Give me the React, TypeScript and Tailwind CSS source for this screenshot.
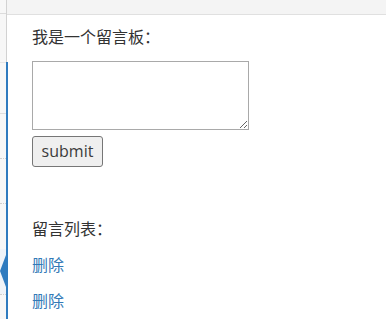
import React from "react";

export default function App() {
  const font = { fontFamily: '"Open Sans", "Noto Sans CJK SC", sans-serif' };
  const cjk = { fontFamily: '"Noto Sans CJK SC", sans-serif' };
  return (
    <div className="flex w-[387px] h-[319px] overflow-hidden bg-white" style={font}>
      {/* left rail */}
      <div className="flex flex-col w-[6px] h-full bg-[#f7f7f7]">
        <div className="h-[13px] shrink-0" />
        <div className="h-[1px] shrink-0 bg-[#dcdcdc]" />
        <div className="h-[48px] shrink-0" />
        <div className="h-[1px] shrink-0 bg-[#e6e6e6]" />
        <div className="h-[50px] shrink-0" />
        <div className="h-[1px] shrink-0 bg-[#dedede]" />
        <div className="h-[44px] shrink-0" />
        <div className="h-[1px] shrink-0 border-t border-dotted border-[#cfcfcf]" />
        <div className="h-[44px] shrink-0" />
        <div className="h-[1px] shrink-0 border-t border-dotted border-[#cfcfcf]" />
        <div className="h-[45px] shrink-0" />
        <div className="h-[45px] shrink-0 bg-[#eff3f8] flex items-center">
          <svg width="6" height="45" viewBox="0 0 6 45" className="block">
            <polygon points="6,6 0,22 6,38" fill="#2f7bbf" />
          </svg>
        </div>
        <div className="h-[1px] shrink-0 border-t border-dotted border-[#cfcfcf]" />
        <div className="flex-1" />
      </div>
      {/* divider */}
      <div className="flex flex-col w-[2px] h-full">
        <div className="h-[62px] shrink-0 flex">
          <div className="w-[1px] h-full bg-[#d2d2d2]" />
          <div className="w-[1px] h-full flex flex-col">
            <div className="h-[14px] bg-[#f4f4f4]" />
            <div className="h-[1px] bg-[#e0e0e0]" />
          </div>
        </div>
        <div className="flex-1 bg-[#2f7bbf]" />
      </div>
      {/* main */}
      <div className="flex-1 flex flex-col min-w-0">
        <div className="h-[15px] shrink-0 bg-[#f4f4f4] border-b border-[#e0e0e0] mr-[1px]" />
        <div className="flex flex-col items-start pl-[24px] text-[16px] text-[#333] leading-[22px]">
          <div className="mt-[10px] h-[22px]" style={cjk}>我是一个留言板：</div>
          <textarea className="mt-[14px] w-[217px] h-[69px] border border-[#a9a9a9] bg-white resize block" />
          <button className="mt-[6px] w-[71px] h-[31px] border border-[#767676] rounded-[3px] bg-[#efefef] text-[16px] text-[#3b3b3b] leading-[22px] flex items-center justify-center pb-[1px]">
            submit
          </button>
          <div className="mt-[50px] h-[22px]" style={cjk}>留言列表：</div>
          <a className="mt-[14px] h-[22px] text-[#337ab7]" style={cjk} href="#">删除</a>
          <a className="mt-[14px] h-[22px] text-[#337ab7]" style={cjk} href="#">删除</a>
        </div>
      </div>
    </div>
  );
}
